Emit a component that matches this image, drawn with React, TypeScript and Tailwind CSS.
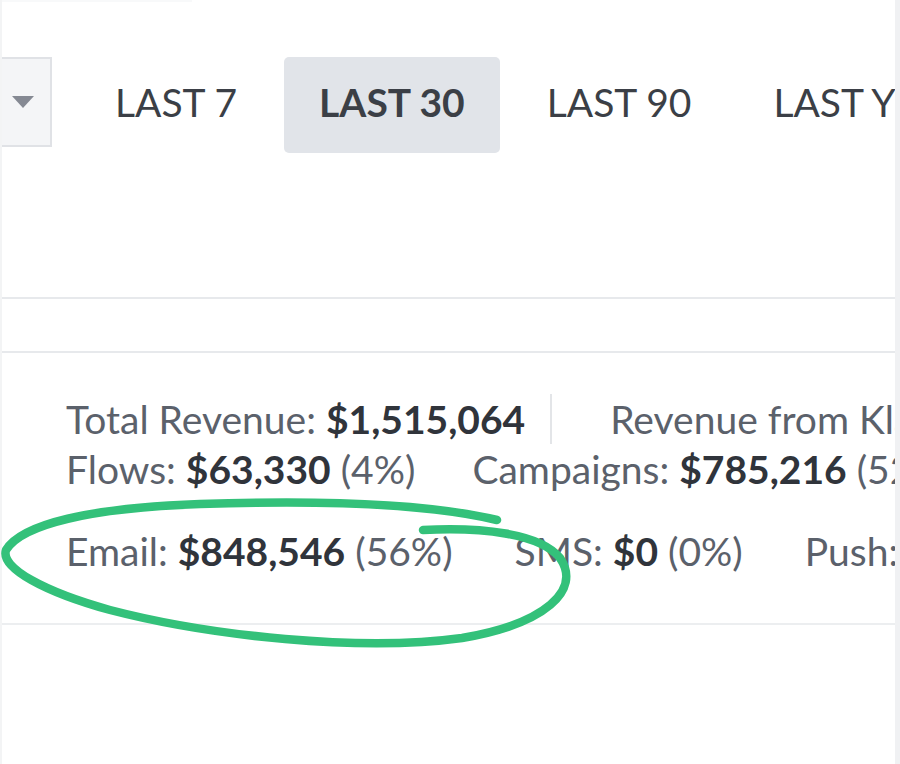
const tabs = ["LAST 7", "LAST 30", "LAST 90", "LAST YEAR"];

type Stat = { label: string; value: string; pct?: string };

function StatItem({ label, value, pct }: Stat) {
  return (
    <span className="whitespace-nowrap">
      <span className="text-[#5b616b]">{label}: </span>
      <span className="font-bold text-[#30343b]">{value}</span>
      {pct && <span className="text-[#5b616b]"> ({pct})</span>}
    </span>
  );
}

function StatRow({ items, className }: { items: Stat[]; className?: string }) {
  return (
    <div className={`flex ${className ?? ""}`}>
      {items.map((s) => (
        <StatItem key={s.label} {...s} />
      ))}
    </div>
  );
}

export default function App() {
  return (
    <div
      className="relative flex w-[900px] h-[764px] overflow-hidden bg-white"
      style={{ fontFamily: "Lato, 'Open Sans', sans-serif" }}
    >
      <div className="w-[895px] shrink-0 overflow-hidden border-l-2 border-[#f3f4f5]">
        <div className="h-[2px] w-[190px] bg-[#f8f9fa]" />

        {/* period picker */}
        <div className="mt-[55px] flex items-start whitespace-nowrap">
          <div className="flex h-[90px] w-[50px] shrink-0 items-center justify-center border-y-2 border-r-2 border-[#e0e2e6] bg-[#f4f5f7]">
            <svg width="22" height="12" viewBox="0 0 22 12" className="mr-[6px]">
              <path d="M0 0 H22 L11 12 Z" fill="#858993" />
            </svg>
          </div>
          <div className="ml-[28px] flex gap-[12px]">
            {tabs.map((t) => (
              <div
                key={t}
                className={`flex h-[96px] shrink-0 items-center rounded-[5px] px-[35px] pb-[5px] text-[39px] text-[#3b3f46] ${
                  t === "LAST 30" ? "bg-[#e1e4e9] font-bold" : ""
                }`}
              >
                {t}
              </div>
            ))}
          </div>
        </div>

        <div className="mt-[144px] h-[2px] bg-[#e7e9ec]" />
        <div className="mt-[52px] h-[2px] bg-[#e7e9ec]" />

        {/* revenue summary */}
        <div className="pl-[64px] text-[39px] leading-[50px]">
          <div className="mt-[41px] flex items-center whitespace-nowrap">
            <StatItem label="Total Revenue" value="$1,515,064" />
            <div className="mx-[25px] h-[50px] w-[2px] shrink-0 bg-[#e3e5e8]" />
            <span className="ml-[33px] text-[#5b616b]">Revenue from Klaviyo: </span>
            <span className="font-bold text-[#30343b]">$1,633,762</span>
          </div>
          <StatRow
            className="gap-[57px]"
            items={[
              { label: "Flows", value: "$63,330", pct: "4%" },
              { label: "Campaigns", value: "$785,216", pct: "52%" },
            ]}
          />
          <StatRow
            className="mt-[32px] gap-[62px]"
            items={[
              { label: "Email", value: "$848,546", pct: "56%" },
              { label: "SMS", value: "$0", pct: "0%" },
              { label: "Push", value: "$0", pct: "0%" },
            ]}
          />
        </div>

        <div className="mt-[47px] h-[2px] bg-[#eceef0]" />
      </div>
      <div className="w-[5px] shrink-0 bg-[#f0f1f3]" />

      {/* hand-drawn marker loop */}
      <svg
        className="pointer-events-none absolute inset-0"
        width="900"
        height="764"
        viewBox="0 0 900 764"
      >
        <path
          d="M423 530 C480 527 540 533 560 558 C582 590 545 624 462 638 C360 652 210 636 110 610 C45 592 0 568 6 550 C22 524 90 508 200 504 C320 500 430 504 497 520"
          fill="none"
          stroke="#33c17a"
          strokeWidth="8.5"
          strokeLinecap="round"
          strokeLinejoin="round"
        />
      </svg>
    </div>
  );
}
